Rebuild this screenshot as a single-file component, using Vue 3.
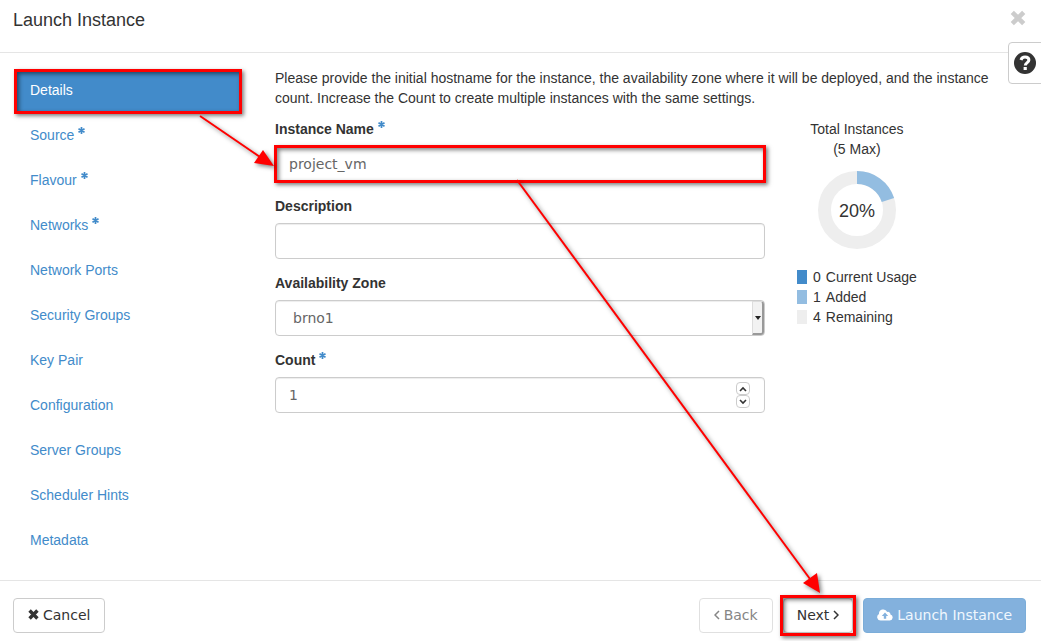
<template>
  <div class="wizard">
    <header class="wizard-header">
      <h1>Launch Instance</h1>
      <button class="close" type="button" aria-label="Close">
        <svg viewBox="0 0 14 14" width="16" height="16">
          <path d="M2 2L12 12M12 2L2 12" stroke="currentColor" stroke-width="4" />
        </svg>
      </button>
    </header>
    <button class="help" type="button" aria-label="Help">
      <svg viewBox="0 0 22 22" width="22" height="22">
        <circle cx="11" cy="11" r="11" fill="#333" />
        <path
          d="M7 8C7.6 5.8 9 5 11 5C13.4 5 14.9 6.3 14.9 8.1C14.9 10.7 11.3 10.6 11.3 13.6"
          fill="none"
          stroke="#fff"
          stroke-width="3"
        />
        <rect x="9.6" y="15" width="3.2" height="3" fill="#fff" />
      </svg>
    </button>

    <div class="wizard-body">
      <nav class="steps">
        <a
          v-for="step in steps"
          :key="step.name"
          href="#"
          :class="{ active: step.name === current, marked: step.name === current }"
          @click.prevent="current = step.name"
        >
          {{ step.name }}
          <svg v-if="step.required" class="required" viewBox="0 0 10 10">
            <path d="M5 0V10M0.7 2.5L9.3 7.5M9.3 2.5L0.7 7.5" />
          </svg>
        </a>
      </nav>

      <main class="content">
        <p class="intro">
          Please provide the initial hostname for the instance, the availability zone where it will
          be deployed, and the instance count. Increase the Count to create multiple instances with
          the same settings.
        </p>
        <div class="columns">
          <form class="details" @submit.prevent>
            <div class="group">
              <label for="name">
                Instance Name
                <svg class="required" viewBox="0 0 10 10">
                  <path d="M5 0V10M0.7 2.5L9.3 7.5M9.3 2.5L0.7 7.5" />
                </svg>
              </label>
              <div class="field marked">
                <input id="name" v-model="form.name" type="text" />
              </div>
            </div>
            <div class="group">
              <label for="description">Description</label>
              <div class="field">
                <input id="description" v-model="form.description" type="text" />
              </div>
            </div>
            <div class="group">
              <label for="zone">Availability Zone</label>
              <div class="field">
                <select id="zone" v-model="form.zone">
                  <option value="brno1">brno1</option>
                </select>
                <span class="select-arrow"></span>
              </div>
            </div>
            <div class="group">
              <label for="count">
                Count
                <svg class="required" viewBox="0 0 10 10">
                  <path d="M5 0V10M0.7 2.5L9.3 7.5M9.3 2.5L0.7 7.5" />
                </svg>
              </label>
              <div class="field">
                <input id="count" v-model.number="form.count" type="number" min="1" :max="max" />
                <div class="spinner">
                  <button type="button" aria-label="Increase" @click="changeCount(1)">
                    <svg viewBox="0 0 8 6" width="8" height="6">
                      <path d="M1 5L4 2L7 5" />
                    </svg>
                  </button>
                  <button type="button" aria-label="Decrease" @click="changeCount(-1)">
                    <svg viewBox="0 0 8 6" width="8" height="6">
                      <path d="M1 1L4 4L7 1" />
                    </svg>
                  </button>
                </div>
              </div>
            </div>
          </form>

          <aside class="quota">
            <div class="quota-title">Total Instances<br />({{ max }} Max)</div>
            <svg class="donut" viewBox="0 0 78 78" width="78" height="78">
              <circle cx="39" cy="39" r="32.5" fill="none" stroke="#eee" stroke-width="13" />
              <circle
                cx="39"
                cy="39"
                r="32.5"
                fill="none"
                stroke="#93bde1"
                stroke-width="13"
                pathLength="100"
                :stroke-dasharray="`${percent} 100`"
                transform="rotate(-90 39 39)"
              />
              <text x="39" y="46" text-anchor="middle">{{ percent }}%</text>
            </svg>
            <ul class="legend">
              <li><i class="used"></i>0 <span>Current Usage</span></li>
              <li><i class="added"></i>{{ form.count }} <span>Added</span></li>
              <li><i class="left"></i>{{ max - form.count }} <span>Remaining</span></li>
            </ul>
          </aside>
        </div>
      </main>
    </div>

    <footer class="wizard-footer">
      <button class="btn cancel" type="button">
        <svg viewBox="0 0 14 14" width="11" height="11">
          <path d="M2 2L12 12M12 2L2 12" stroke="currentColor" stroke-width="4.4" />
        </svg>
        Cancel
      </button>
      <button class="btn" type="button" disabled>
        <svg viewBox="0 0 6 10" width="6" height="10">
          <path d="M5 1L1 5L5 9" fill="none" stroke="currentColor" stroke-width="1.5" />
        </svg>
        Back
      </button>
      <button class="btn next marked" type="button">
        Next
        <svg viewBox="0 0 6 10" width="6" height="10">
          <path d="M1 1L5 5L1 9" fill="none" stroke="currentColor" stroke-width="1.5" />
        </svg>
      </button>
      <button class="btn primary" type="button" disabled>
        <svg viewBox="0 0 16 12" width="16" height="12">
          <path
            d="M3.6 11.5A3.4 3.4 0 0 1 2 5.1A4.3 4.3 0 0 1 10.2 3A2.4 2.4 0 0 1 13.4 5.6A3 3 0 0 1 12.8 11.5Z"
            fill="#fff"
          />
          <path d="M8 3.6L11.2 7H9.2V9.8H6.8V7H4.8Z" fill="#83b1dd" />
        </svg>
        Launch Instance
      </button>
    </footer>

    <svg class="arrows" width="1041" height="641" viewBox="0 0 1041 641">
      <g v-for="arrow in arrows" :key="arrow.line">
        <path :d="arrow.line" fill="none" stroke="#f00" stroke-width="2" />
        <path :d="arrow.head" fill="#f00" />
      </g>
    </svg>
  </div>
</template>

<script setup>
import { computed, reactive, ref } from 'vue'

const steps = [
  { name: 'Details' },
  { name: 'Source', required: true },
  { name: 'Flavour', required: true },
  { name: 'Networks', required: true },
  { name: 'Network Ports' },
  { name: 'Security Groups' },
  { name: 'Key Pair' },
  { name: 'Configuration' },
  { name: 'Server Groups' },
  { name: 'Scheduler Hints' },
  { name: 'Metadata' }
]

const arrows = [
  { line: 'M200 116L260 157', head: 'M274 166L254 163L263 150Z' },
  { line: 'M517 180L810 579', head: 'M820 593L803 583L817 573Z' }
]

const max = 5
const current = ref('Details')
const form = reactive({
  name: 'project_vm',
  description: '',
  zone: 'brno1',
  count: 1
})

const percent = computed(() => Math.round((form.count / max) * 100))

function changeCount(step) {
  form.count = Math.min(max, Math.max(1, form.count + step))
}
</script>

<style>
body {
  margin: 0;
  background: #fff;
}
</style>

<style scoped>
.wizard {
  position: relative;
  overflow: hidden;
  color: #333;
  font: 14px/20px "Liberation Sans", Arial, sans-serif;
}

.wizard * {
  box-sizing: border-box;
}

.wizard-header {
  display: flex;
  align-items: flex-start;
  justify-content: space-between;
  height: 53px;
  padding: 10px 15px 0 13px;
  border-bottom: 1px solid #e5e5e5;
}

h1 {
  margin: 0;
  font-size: 18px;
  font-weight: normal;
  line-height: 20px;
}

.close {
  display: flex;
  padding: 0;
  border: 0;
  background: none;
  color: #ccc;
}

.help {
  position: absolute;
  top: 42px;
  right: -4px;
  display: flex;
  align-items: center;
  width: 37px;
  height: 42px;
  padding: 0 5px;
  border: 1px solid #ccc;
  border-radius: 4px;
  background: #fff;
}

.wizard-body {
  display: grid;
  grid-template-columns: 226fr 751fr;
  gap: 34px;
  padding: 17px 15px;
}

.steps {
  display: flex;
  flex-direction: column;
  gap: 2px;
}

.steps a {
  height: 43px;
  padding: 10px 15px;
  color: #428bca;
  text-decoration: none;
}

.steps a.active {
  background: #428bca;
  color: #fff;
}

.required {
  width: 7px;
  height: 7px;
  vertical-align: 6px;
}

.required path {
  stroke: #428bca;
  stroke-width: 2.4;
}

.marked {
  position: relative;
}

.marked::after {
  content: "";
  position: absolute;
  inset: -1px;
  border: 3px solid #f00;
  box-shadow: 2px 2px 4px rgba(0, 0, 0, 0.5), inset 2px 2px 4px rgba(0, 0, 0, 0.5);
  pointer-events: none;
}

.next.marked::after {
  inset: -4px;
}

.intro {
  margin: -2px 0 11px;
}

.columns {
  display: grid;
  grid-template-columns: 490fr 229fr;
  gap: 32px;
}

.group {
  margin-bottom: 14px;
}

label {
  display: block;
  height: 20px;
  margin-bottom: 7px;
  font-weight: bold;
}

.field {
  position: relative;
  height: 36px;
}

input,
select {
  width: 100%;
  height: 100%;
  padding: 6px 13px;
  border: 1px solid #ccc;
  border-radius: 4px;
  background: #fff;
  box-shadow: inset 0 1px 1px rgba(0, 0, 0, 0.075);
  color: #666;
  font: 14px/20px "DejaVu Sans", sans-serif;
  appearance: none;
}

select {
  padding-left: 17px;
}

input[type="number"] {
  appearance: textfield;
}

input::-webkit-inner-spin-button {
  display: none;
}

.select-arrow {
  position: absolute;
  top: 1px;
  right: 1px;
  bottom: 1px;
  display: flex;
  align-items: center;
  justify-content: center;
  width: 12px;
  border: 1px solid #ddd;
  border-right: 2px solid #999;
  border-bottom: 2px solid #999;
  border-radius: 0 3px 3px 0;
  background: #f2f2f2;
  pointer-events: none;
}

.select-arrow::before {
  content: "";
  border: 3px solid transparent;
  border-top: 4px solid #222;
  border-bottom: 0;
}

.spinner {
  position: absolute;
  top: 5px;
  right: 15px;
  display: flex;
  flex-direction: column;
}

.spinner button {
  display: flex;
  align-items: center;
  justify-content: center;
  width: 14px;
  height: 13px;
  padding: 0;
  border: 1px solid #ccc;
  border-radius: 4px;
  background: #fff;
}

.spinner path {
  fill: none;
  stroke: #333;
  stroke-width: 1.6;
}

.quota {
  justify-self: start;
}

.quota-title {
  text-align: center;
}

.donut {
  display: block;
  margin: 12px auto 18px;
}

.donut text {
  fill: #333;
  font-size: 18px;
}

.legend {
  margin: 0;
  padding: 0;
  list-style: none;
}

.legend li {
  display: flex;
  align-items: center;
  height: 20px;
}

.legend i {
  width: 10px;
  height: 14px;
  margin-right: 6px;
}

.legend span {
  margin-left: 5px;
}

.used {
  background: #428bca;
}

.added {
  background: #93bde1;
}

.left {
  background: #eee;
}

.wizard-footer {
  display: flex;
  gap: 10px;
  padding: 17px 15px 8px 13px;
  border-top: 1px solid #e5e5e5;
}

.btn {
  display: flex;
  align-items: center;
  gap: 4px;
  height: 35px;
  padding: 0 14px 2px;
  border: 1px solid #ccc;
  border-radius: 4px;
  background: #fff;
  color: #333;
  font: 14px/20px "DejaVu Sans", sans-serif;
  white-space: nowrap;
}

.btn:disabled {
  border-color: #e0e0e0;
  color: #858585;
}

.cancel {
  margin-right: auto;
}

.btn.next {
  padding: 0 13px 2px;
}

.btn.primary {
  padding: 0 13px 2px;
  border-color: #7badd9;
  background: #83b1dd;
  color: #f0f7fd;
}

.arrows {
  position: absolute;
  top: 0;
  left: 0;
  pointer-events: none;
  filter: drop-shadow(2px 2px 2px rgba(0, 0, 0, 0.5));
}
</style>
